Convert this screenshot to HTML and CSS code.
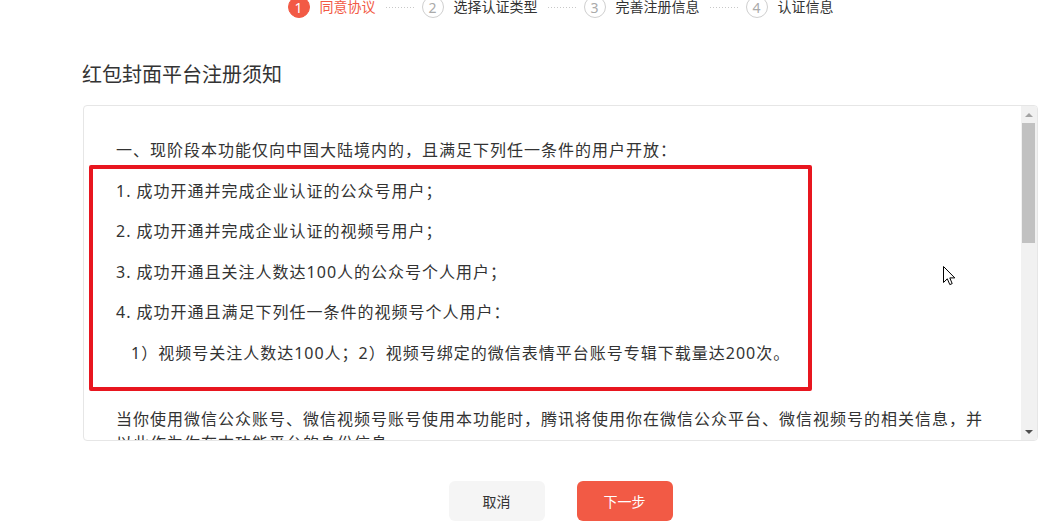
FILE: index.html
```html
<!DOCTYPE html>
<html lang="zh-CN">
<head>
    <meta charset="UTF-8">
    <meta name="viewport" content="width=device-width, initial-scale=1.0">
    <title>红包封面平台注册须知</title>
    <link rel="stylesheet" href="styles.css">
</head>
<body>
    <div class="page">
        <div class="steps">
            <div class="step active"><span class="num">1</span><span class="label">同意协议</span></div>
            <span class="dots"></span>
            <div class="step"><span class="num">2</span><span class="label">选择认证类型</span></div>
            <span class="dots"></span>
            <div class="step"><span class="num">3</span><span class="label">完善注册信息</span></div>
            <span class="dots"></span>
            <div class="step"><span class="num">4</span><span class="label">认证信息</span></div>
        </div>

        <h1 class="title">红包封面平台注册须知</h1>

        <div class="notice">
            <div class="notice-body">
                <p>一、现阶段本功能仅向中国大陆境内的，且满足下列任一条件的用户开放：</p>
                <p>1. 成功开通并完成企业认证的公众号用户；</p>
                <p>2. 成功开通并完成企业认证的视频号用户；</p>
                <p>3. 成功开通且关注人数达100人的公众号个人用户；</p>
                <p>4. 成功开通且满足下列任一条件的视频号个人用户：</p>
                <p class="sub">1）视频号关注人数达100人；2）视频号绑定的微信表情平台账号专辑下载量达200次。</p>
                <p class="para">当你使用微信公众账号、微信视频号账号使用本功能时，腾讯将使用你在微信公众平台、微信视频号的相关信息，并以此作为你在本功能平台的身份信息。</p>
                <div class="mark"></div>
            </div>
            <div class="scrollbar">
                <span class="arrow up"></span>
                <span class="thumb"></span>
                <span class="track"></span>
                <span class="arrow down"></span>
            </div>
            <svg class="cursor" width="13" height="20" viewBox="0 0 13 20">
                <path d="M0.5 0.5 L0.5 16.5 L4.3 12.8 L6.8 18.6 L9.2 17.6 L6.8 11.9 L11.8 11.9 Z" fill="#fff" stroke="#000" stroke-width="1" stroke-linejoin="miter"/>
            </svg>
        </div>

        <div class="actions">
            <button class="btn cancel">取消</button>
            <button class="btn primary">下一步</button>
        </div>
    </div>
</body>
</html>
```

FILE: styles.css
```css
body {
    margin: 0;
    background: #fff;
    font-family: "Noto Sans", "Noto Sans CJK SC", sans-serif;
    color: #333;
}

.page {
    margin: 0 11px 0 83px;
}

/* steps */
.steps {
    display: flex;
    align-items: center;
    justify-content: center;
    height: 22px;
    margin-top: -4px;
}

.step {
    display: flex;
    align-items: center;
    gap: 10px;
}

.num {
    display: flex;
    align-items: center;
    justify-content: center;
    width: 22px;
    height: 22px;
    box-sizing: border-box;
    border: 1px solid #cfcfcf;
    border-radius: 50%;
    font-size: 14px;
    color: #aaa;
}

.label {
    font-size: 14px;
    line-height: 22px;
    color: #333;
}

.step.active .num {
    background: #f25a45;
    border-color: #f25a45;
    color: #fff;
}

.step.active .label {
    color: #f25a45;
}

.dots {
    width: 28px;
    height: 1px;
    margin: 0 8px 0 10px;
    background: repeating-linear-gradient(to right, #c8c8c8 0 1px, transparent 1px 3px);
}

/* title */
.title {
    margin: 43px 0 16px -1px;
    font-size: 20px;
    font-weight: normal;
    line-height: 28px;
    color: #333;
}

/* notice box */
.notice {
    position: relative;
    display: flex;
    height: 336px;
    box-sizing: border-box;
    border: 1px solid #e6e6e6;
    border-radius: 4px;
    overflow: hidden;
}

.notice-body {
    position: relative;
    flex: 1;
    padding: 32px 30px 0 32px;
    overflow: hidden;
    font-size: 16px;
    letter-spacing: 1px;
    line-height: 24px;
}

.notice-body p {
    margin: 0 0 16.6px;
}

.notice-body .sub {
    padding-left: 15px;
}

.notice-body .para {
    margin-top: 42px;
}

.mark {
    position: absolute;
    left: 5px;
    top: 59px;
    width: 723px;
    height: 226px;
    box-sizing: border-box;
    border: 4px solid #e8161f;
    border-radius: 2px;
}

.scrollbar {
    display: flex;
    flex-direction: column;
    width: 16px;
    background: #f1f1f1;
}

.arrow {
    display: flex;
    align-items: center;
    justify-content: center;
    height: 17px;
}

.arrow::after {
    content: "";
    border-left: 4px solid transparent;
    border-right: 4px solid transparent;
}

.arrow.up::after {
    border-bottom: 4px solid #a3a3a3;
}

.arrow.down::after {
    border-top: 4px solid #505050;
}

.thumb {
    height: 120px;
    width: 13px;
    margin-left: 1px;
    background: #c1c1c1;
}

.track {
    flex: 1;
}

.cursor {
    position: absolute;
    left: 859px;
    top: 160px;
}

/* buttons */
.actions {
    display: flex;
    justify-content: center;
    gap: 32px;
    margin-top: 40px;
}

.btn {
    width: 96px;
    height: 40px;
    border: none;
    border-radius: 6px;
    font-family: "Noto Sans", "Noto Sans CJK SC", sans-serif;
    font-size: 14px;
    cursor: pointer;
}

.cancel {
    background: #f5f5f5;
    color: #333;
}

.primary {
    background: #f25a45;
    color: #fff;
}
```
